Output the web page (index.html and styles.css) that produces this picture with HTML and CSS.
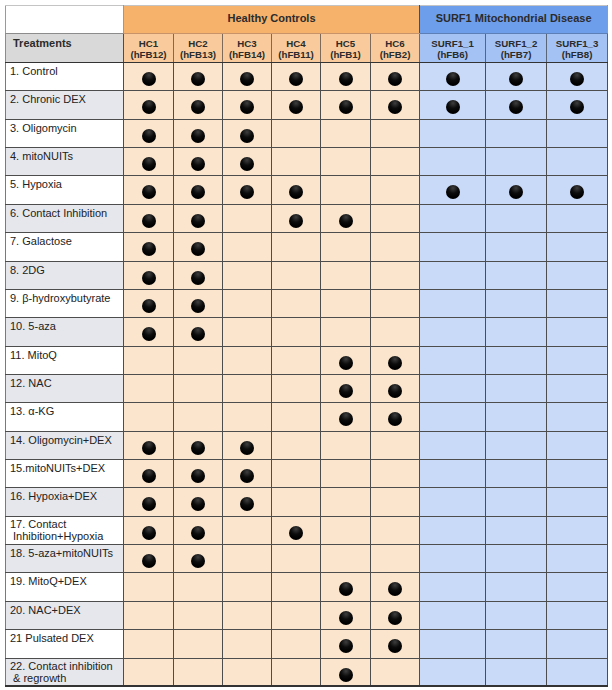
FILE: index.html
```html
<!DOCTYPE html>
<html>
<head>
<meta charset="utf-8">
<link rel="stylesheet" href="styles.css">
</head>
<body>
<table class="matrix">
  <colgroup>
    <col class="c-treat">
    <col class="c-hc1"><col class="c-hc"><col class="c-hc"><col class="c-hc"><col class="c-hc1"><col class="c-hc">
    <col class="c-s1"><col class="c-s"><col class="c-s">
  </colgroup>
  <thead>
    <tr class="group-row">
      <th class="corner"></th>
      <th class="grp-hc" colspan="6">Healthy Controls</th>
      <th class="grp-sf" colspan="3">SURF1 Mitochondrial Disease</th>
    </tr>
    <tr class="col-row">
      <th class="treat-head">Treatments</th>
      <th class="hc-head">HC1<br>(hFB12)</th>
      <th class="hc-head">HC2<br>(hFB13)</th>
      <th class="hc-head">HC3<br>(hFB14)</th>
      <th class="hc-head">HC4<br>(hFB11)</th>
      <th class="hc-head">HC5<br>(hFB1)</th>
      <th class="hc-head">HC6<br>(hFB2)</th>
      <th class="sf-head">SURF1_1<br>(hFB6)</th>
      <th class="sf-head">SURF1_2<br>(hFB7)</th>
      <th class="sf-head">SURF1_3<br>(hFB8)</th>
    </tr>
  </thead>
  <tbody>
    <tr>
      <td class="label">1. Control</td>
      <td class="hc"><span class="dot"></span></td><td class="hc"><span class="dot"></span></td><td class="hc"><span class="dot"></span></td><td class="hc"><span class="dot"></span></td><td class="hc"><span class="dot"></span></td><td class="hc"><span class="dot"></span></td>
      <td class="sf"><span class="dot"></span></td><td class="sf"><span class="dot"></span></td><td class="sf"><span class="dot"></span></td>
    </tr>
    <tr class="alt">
      <td class="label">2. Chronic DEX</td>
      <td class="hc"><span class="dot"></span></td><td class="hc"><span class="dot"></span></td><td class="hc"><span class="dot"></span></td><td class="hc"><span class="dot"></span></td><td class="hc"><span class="dot"></span></td><td class="hc"><span class="dot"></span></td>
      <td class="sf"><span class="dot"></span></td><td class="sf"><span class="dot"></span></td><td class="sf"><span class="dot"></span></td>
    </tr>
    <tr>
      <td class="label">3. Oligomycin</td>
      <td class="hc"><span class="dot"></span></td><td class="hc"><span class="dot"></span></td><td class="hc"><span class="dot"></span></td><td class="hc"></td><td class="hc"></td><td class="hc"></td>
      <td class="sf"></td><td class="sf"></td><td class="sf"></td>
    </tr>
    <tr class="alt">
      <td class="label">4. mitoNUITs</td>
      <td class="hc"><span class="dot"></span></td><td class="hc"><span class="dot"></span></td><td class="hc"><span class="dot"></span></td><td class="hc"></td><td class="hc"></td><td class="hc"></td>
      <td class="sf"></td><td class="sf"></td><td class="sf"></td>
    </tr>
    <tr>
      <td class="label">5. Hypoxia</td>
      <td class="hc"><span class="dot"></span></td><td class="hc"><span class="dot"></span></td><td class="hc"><span class="dot"></span></td><td class="hc"><span class="dot"></span></td><td class="hc"></td><td class="hc"></td>
      <td class="sf"><span class="dot"></span></td><td class="sf"><span class="dot"></span></td><td class="sf"><span class="dot"></span></td>
    </tr>
    <tr class="alt">
      <td class="label">6. Contact Inhibition</td>
      <td class="hc"><span class="dot"></span></td><td class="hc"><span class="dot"></span></td><td class="hc"></td><td class="hc"><span class="dot"></span></td><td class="hc"><span class="dot"></span></td><td class="hc"></td>
      <td class="sf"></td><td class="sf"></td><td class="sf"></td>
    </tr>
    <tr>
      <td class="label">7. Galactose</td>
      <td class="hc"><span class="dot"></span></td><td class="hc"><span class="dot"></span></td><td class="hc"></td><td class="hc"></td><td class="hc"></td><td class="hc"></td>
      <td class="sf"></td><td class="sf"></td><td class="sf"></td>
    </tr>
    <tr class="alt">
      <td class="label">8. 2DG</td>
      <td class="hc"><span class="dot"></span></td><td class="hc"><span class="dot"></span></td><td class="hc"></td><td class="hc"></td><td class="hc"></td><td class="hc"></td>
      <td class="sf"></td><td class="sf"></td><td class="sf"></td>
    </tr>
    <tr>
      <td class="label">9. β-hydroxybutyrate</td>
      <td class="hc"><span class="dot"></span></td><td class="hc"><span class="dot"></span></td><td class="hc"></td><td class="hc"></td><td class="hc"></td><td class="hc"></td>
      <td class="sf"></td><td class="sf"></td><td class="sf"></td>
    </tr>
    <tr class="alt">
      <td class="label">10. 5-aza</td>
      <td class="hc"><span class="dot"></span></td><td class="hc"><span class="dot"></span></td><td class="hc"></td><td class="hc"></td><td class="hc"></td><td class="hc"></td>
      <td class="sf"></td><td class="sf"></td><td class="sf"></td>
    </tr>
    <tr>
      <td class="label">11. MitoQ</td>
      <td class="hc"></td><td class="hc"></td><td class="hc"></td><td class="hc"></td><td class="hc"><span class="dot"></span></td><td class="hc"><span class="dot"></span></td>
      <td class="sf"></td><td class="sf"></td><td class="sf"></td>
    </tr>
    <tr class="alt">
      <td class="label">12. NAC</td>
      <td class="hc"></td><td class="hc"></td><td class="hc"></td><td class="hc"></td><td class="hc"><span class="dot"></span></td><td class="hc"><span class="dot"></span></td>
      <td class="sf"></td><td class="sf"></td><td class="sf"></td>
    </tr>
    <tr>
      <td class="label">13. α-KG</td>
      <td class="hc"></td><td class="hc"></td><td class="hc"></td><td class="hc"></td><td class="hc"><span class="dot"></span></td><td class="hc"><span class="dot"></span></td>
      <td class="sf"></td><td class="sf"></td><td class="sf"></td>
    </tr>
    <tr class="alt">
      <td class="label">14. Oligomycin+DEX</td>
      <td class="hc"><span class="dot"></span></td><td class="hc"><span class="dot"></span></td><td class="hc"><span class="dot"></span></td><td class="hc"></td><td class="hc"></td><td class="hc"></td>
      <td class="sf"></td><td class="sf"></td><td class="sf"></td>
    </tr>
    <tr>
      <td class="label">15.mitoNUITs+DEX</td>
      <td class="hc"><span class="dot"></span></td><td class="hc"><span class="dot"></span></td><td class="hc"><span class="dot"></span></td><td class="hc"></td><td class="hc"></td><td class="hc"></td>
      <td class="sf"></td><td class="sf"></td><td class="sf"></td>
    </tr>
    <tr class="alt">
      <td class="label">16. Hypoxia+DEX</td>
      <td class="hc"><span class="dot"></span></td><td class="hc"><span class="dot"></span></td><td class="hc"><span class="dot"></span></td><td class="hc"></td><td class="hc"></td><td class="hc"></td>
      <td class="sf"></td><td class="sf"></td><td class="sf"></td>
    </tr>
    <tr>
      <td class="label two">17. Contact<br>&nbsp;Inhibition+Hypoxia</td>
      <td class="hc"><span class="dot"></span></td><td class="hc"><span class="dot"></span></td><td class="hc"></td><td class="hc"><span class="dot"></span></td><td class="hc"></td><td class="hc"></td>
      <td class="sf"></td><td class="sf"></td><td class="sf"></td>
    </tr>
    <tr class="alt">
      <td class="label">18. 5-aza+mitoNUITs</td>
      <td class="hc"><span class="dot"></span></td><td class="hc"><span class="dot"></span></td><td class="hc"></td><td class="hc"></td><td class="hc"></td><td class="hc"></td>
      <td class="sf"></td><td class="sf"></td><td class="sf"></td>
    </tr>
    <tr>
      <td class="label">19. MitoQ+DEX</td>
      <td class="hc"></td><td class="hc"></td><td class="hc"></td><td class="hc"></td><td class="hc"><span class="dot"></span></td><td class="hc"><span class="dot"></span></td>
      <td class="sf"></td><td class="sf"></td><td class="sf"></td>
    </tr>
    <tr class="alt">
      <td class="label">20. NAC+DEX</td>
      <td class="hc"></td><td class="hc"></td><td class="hc"></td><td class="hc"></td><td class="hc"><span class="dot"></span></td><td class="hc"><span class="dot"></span></td>
      <td class="sf"></td><td class="sf"></td><td class="sf"></td>
    </tr>
    <tr>
      <td class="label">21 Pulsated DEX</td>
      <td class="hc"></td><td class="hc"></td><td class="hc"></td><td class="hc"></td><td class="hc"><span class="dot"></span></td><td class="hc"><span class="dot"></span></td>
      <td class="sf"></td><td class="sf"></td><td class="sf"></td>
    </tr>
    <tr class="alt last">
      <td class="label two">22. Contact inhibition<br>&nbsp;&amp; regrowth</td>
      <td class="hc"></td><td class="hc"></td><td class="hc"></td><td class="hc"></td><td class="hc"><span class="dot"></span></td><td class="hc"></td>
      <td class="sf"></td><td class="sf"></td><td class="sf"></td>
    </tr>
  </tbody>
</table>
</body>
</html>
```

FILE: styles.css
```css
html, body {
  margin: 0;
  padding: 0;
  background: #ffffff;
}

body {
  font-family: "Liberation Sans", Arial, sans-serif;
  color: #222222;
}

.matrix {
  margin: 5px 0 0 5px;
  width: 602px;
  table-layout: fixed;
  border-collapse: collapse;
  border-spacing: 0;
}

.c-treat { width: 118px; }
.c-hc1 { width: 50px; }
.c-hc { width: 49px; }
.c-s1 { width: 66px; }
.c-s { width: 61px; }

.matrix th,
.matrix td {
  padding: 0;
  border: 1px solid #4d4d4d;
}

/* group header row */
.group-row {
  height: 28px;
}

.group-row th {
  font-size: 11px;
  line-height: 13px;
  font-weight: bold;
  color: #2b2b2b;
  text-align: center;
  vertical-align: middle;
  padding-bottom: 2px;
  border-top: 1px solid #c4c4c4;
}

.corner {
  background: #ffffff;
  border-left: 1px solid #9a9a9a !important;
  border-bottom: 1px solid #8c8c8c !important;
  border-right: 1px solid #9a9a9a !important;
}

.grp-hc {
  background: #f6b26b;
  border-bottom: 1px solid #c9936a !important;
}

.grp-sf {
  background: #6d9eeb;
  border-bottom: 1px solid #5d7fb8 !important;
  border-right: 1px solid #9a9a9a !important;
}

/* column header row */
.col-row {
  height: 29px;
}

.col-row th {
  font-size: 9.7px;
  line-height: 11px;
  font-weight: bold;
  color: #2b2b2b;
  text-align: center;
  vertical-align: middle;
  padding-top: 2px;
  border-bottom: 1px solid #333333;
}

.treat-head {
  background: #d9d9d9;
  text-align: left !important;
  vertical-align: top !important;
  font-size: 11px !important;
  line-height: 13px !important;
  padding: 3px 0 0 7px !important;
  border-left: 1px solid #8c8c8c !important;
}

.hc-head {
  background: #f9cb9c;
  border-left: 1px solid #7d6a5a !important;
  border-right: 1px solid #7d6a5a !important;
}

.sf-head {
  background: #a4c2f4;
  border-left: 1px solid #5a6577 !important;
  border-right: 1px solid #5a6577 !important;
}

/* body */
.matrix tbody tr {
  height: 28.36px;
}

.label {
  background: #ffffff;
  font-size: 11px;
  line-height: 13px;
  vertical-align: top;
  padding: 2px 0 0 4px !important;
  border-left: 1px solid #7a7a7a !important;
  white-space: nowrap;
  overflow: hidden;
}

.alt .label {
  background: #e6e7ec;
}

.label.two {
  line-height: 12px;
  padding-top: 1px !important;
}

.hc {
  background: #fce5cd;
  vertical-align: top;
}

.sf {
  background: #c9daf8;
  vertical-align: top;
}

.last td {
  border-bottom: 2px solid #333333;
}

.dot {
  display: block;
  width: 14px;
  height: 14px;
  margin: 9px auto 0;
  border-radius: 50%;
  background: radial-gradient(circle at 50% 22%, #3e3e3e 0, #0c0c0c 40%, #000000 70%);
}
```
